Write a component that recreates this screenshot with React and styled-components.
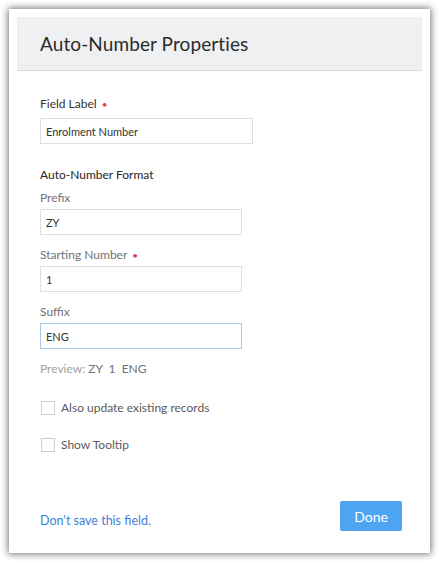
import React, { useState } from 'react';
import styled, { createGlobalStyle } from 'styled-components';

const GlobalStyle = createGlobalStyle`
  html, body {
    margin: 0;
    padding: 0;
    background: #ffffff;
  }
  body {
    font-family: Lato, "Open Sans", "Liberation Sans", sans-serif;
    color: #333;
  }
  * { box-sizing: border-box; }
`;

const Page = styled.div`
  width: 439px;
  height: 562px;
  padding: 9px;
`;

const Card = styled.div`
  width: 421px;
  height: 544px;
  background: #fff;
  padding: 8px;
  box-shadow: 0 0 7px 1px rgba(0, 0, 0, 0.55);
  display: flex;
  flex-direction: column;
`;

const Header = styled.div`
  height: 54px;
  background: #eff0f2;
  border-bottom: 1px solid #d9d9d9;
  padding-left: 23px;
  display: flex;
  align-items: center;
`;

const Title = styled.h1`
  margin: 0;
  font-size: 19px;
  font-weight: 400;
  color: #2b2b2b;
  letter-spacing: 0.1px;
`;

const Body = styled.div`
  flex: 1;
  padding: 25px 23px 0;
  display: flex;
  flex-direction: column;
`;

const Label = styled.div`
  font-size: 12px;
  color: ${p => (p.muted ? '#727272' : '#333')};
  height: 15px;
  line-height: 15px;
  margin-bottom: ${p => (p.muted ? 4 : 7)}px;
`;

const Required = styled.span`
  color: #e0393e;
  margin-left: 5px;
  font-size: 10px;
`;

const Input = styled.input`
  width: ${p => p.w}px;
  height: 26px;
  border: 1px solid ${p => (p.focused ? '#a9cbeb' : '#dedede')};
  outline: none;
  padding: 0 5px;
  font-family: inherit;
  font-size: 11px;
  color: #333;
  margin-bottom: ${p => p.mb}px;
`;

const SectionTitle = styled.div`
  font-size: 12px;
  color: #262626;
  height: 15px;
  line-height: 15px;
  margin-bottom: 8px;
`;

const Preview = styled.div`
  font-size: 12px;
  color: #a0a0a0;
  height: 15px;
  line-height: 15px;
  margin-bottom: 24px;
  span { color: #707070; word-spacing: 3px; }
`;

const CheckRow = styled.label`
  display: flex;
  align-items: center;
  gap: 6px;
  font-size: 12px;
  color: #5a5a5a;
  height: 15px;
  margin-bottom: ${p => p.mb}px;
  cursor: pointer;
`;

const Box = styled.span`
  width: 14px;
  height: 14px;
  border: 1px solid #cfcfcf;
  background: #fff;
  display: inline-block;
  margin-left: 1px;
`;

const Footer = styled.div`
  display: flex;
  align-items: center;
  justify-content: space-between;
  padding: 0 20px 14px 23px;
`;

const Link = styled.a`
  font-size: 12.5px;
  color: #3f82d6;
  text-decoration: none;
  cursor: pointer;
  margin-top: 8px;
`;

const Button = styled.button`
  width: 62px;
  height: 30px;
  border: none;
  border-radius: 2px;
  background: #4ea6f3;
  color: #fff;
  font-family: inherit;
  font-size: 14px;
  cursor: pointer;
`;

export default function App() {
  const [label, setLabel] = useState('Enrolment Number');
  const [prefix, setPrefix] = useState('ZY');
  const [start, setStart] = useState('1');
  const [suffix, setSuffix] = useState('ENG');

  return (
    <Page>
      <GlobalStyle />
      <Card>
        <Header>
          <Title>Auto-Number Properties</Title>
        </Header>
        <Body>
          <Label>Field Label<Required>•</Required></Label>
          <Input w={213} mb={23} value={label} onChange={e => setLabel(e.target.value)} />
          <SectionTitle>Auto-Number Format</SectionTitle>
          <Label muted>Prefix</Label>
          <Input w={202} mb={12} value={prefix} onChange={e => setPrefix(e.target.value)} />
          <Label muted>Starting Number<Required>•</Required></Label>
          <Input w={202} mb={12} value={start} onChange={e => setStart(e.target.value)} />
          <Label muted>Suffix</Label>
          <Input w={202} mb={12} focused value={suffix} onChange={e => setSuffix(e.target.value)} />
          <Preview>Preview: <span>{prefix} {start} {suffix}</span></Preview>
          <CheckRow mb={22}><Box />Also update existing records</CheckRow>
          <CheckRow mb={0}><Box />Show Tooltip</CheckRow>
        </Body>
        <Footer>
          <Link>Don't save this field.</Link>
          <Button>Done</Button>
        </Footer>
      </Card>
    </Page>
  );
}
